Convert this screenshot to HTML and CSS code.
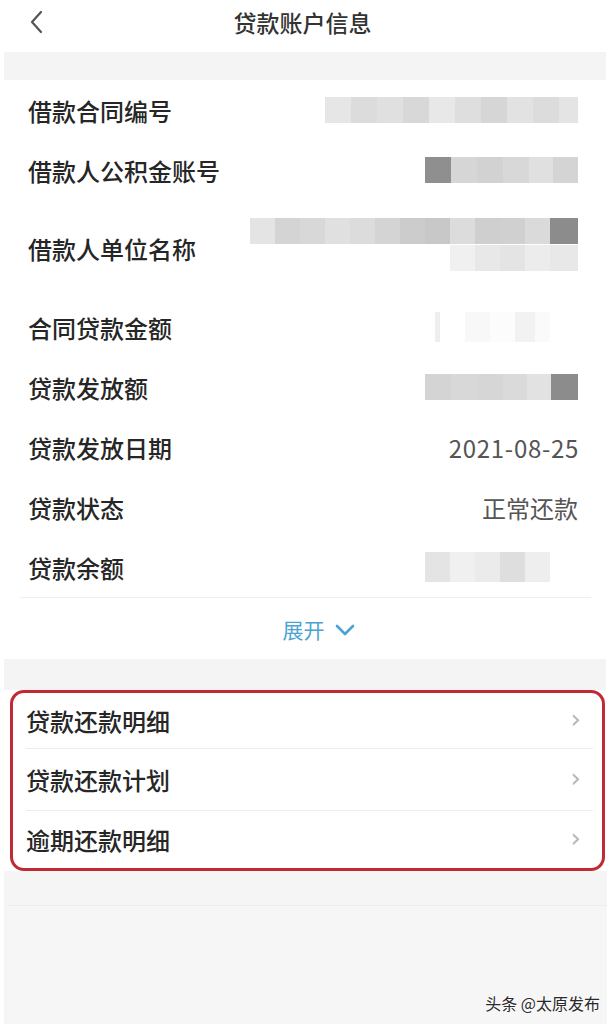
FILE: index.html
```html
<!DOCTYPE html>
<html lang="zh-CN">
<head>
    <meta charset="UTF-8">
    <meta name="viewport" content="width=device-width, initial-scale=1.0">
    <title>贷款账户信息</title>
    <link rel="stylesheet" href="styles.css">
</head>
<body>
    <div class="screen">
        <header class="nav">
            <svg class="back" width="14" height="24" viewBox="0 0 14 24">
                <path d="M12 2 L3 12 L12 22" fill="none" stroke="#555" stroke-width="2.2" stroke-linecap="round" stroke-linejoin="round"/>
            </svg>
            <h1>贷款账户信息</h1>
        </header>

        <div class="gap-strip"></div>

        <section class="info">
            <div class="row">
                <span class="label">借款合同编号</span>
                <div class="mask">
                    <i style="width:26px;background:#e6e6e6"></i><i style="width:26px;background:#dcdcdc"></i><i style="width:26px;background:#e0e0e0"></i><i style="width:26px;background:#d8d8d8"></i><i style="width:26px;background:#e8e8e8"></i><i style="width:26px;background:#dedede"></i><i style="width:26px;background:#d6d6d6"></i><i style="width:26px;background:#e2e2e2"></i><i style="width:26px;background:#dcdcdc"></i><i style="width:19px;background:#e4e4e4"></i>
                </div>
            </div>
            <div class="row">
                <span class="label">借款人公积金账号</span>
                <div class="mask">
                    <i style="width:26px;background:#8f8f8f"></i><i style="width:26px;background:#d6d6d6"></i><i style="width:26px;background:#d2d2d2"></i><i style="width:26px;background:#d8d8d8"></i><i style="width:24px;background:#e0e0e0"></i><i style="width:25px;background:#d4d4d4"></i>
                </div>
            </div>
            <div class="row tall">
                <span class="label">借款人单位名称</span>
                <div class="mask-lines">
                    <div class="mask">
                        <i style="width:25px;background:#e4e4e4"></i><i style="width:25px;background:#d4d4d4"></i><i style="width:25px;background:#d8d8d8"></i><i style="width:25px;background:#e0e0e0"></i><i style="width:25px;background:#dcdcdc"></i><i style="width:25px;background:#d4d4d4"></i><i style="width:25px;background:#cccccc"></i><i style="width:25px;background:#c8c8c8"></i><i style="width:25px;background:#dcdcdc"></i><i style="width:25px;background:#cfcfcf"></i><i style="width:25px;background:#d0d0d0"></i><i style="width:25px;background:#dadada"></i><i style="width:28px;background:#8c8c8c"></i>
                    </div>
                    <div class="mask">
                        <i style="width:25px;background:#f0f0f0"></i><i style="width:25px;background:#e8e8e8"></i><i style="width:25px;background:#e4e4e4"></i><i style="width:25px;background:#ececec"></i><i style="width:28px;background:#e8e8e8"></i>
                    </div>
                </div>
            </div>
            <div class="row">
                <span class="label">合同贷款金额</span>
                <div class="mask faint">
                    <i style="width:5px;background:#eeeeee"></i><i style="width:25px;background:#ffffff"></i><i style="width:25px;background:#f8f8f8"></i><i style="width:25px;background:#fcfcfc"></i><i style="width:20px;background:#f2f2f2"></i><i style="width:15px;background:#fafafa"></i>
                </div>
            </div>
            <div class="row">
                <span class="label">贷款发放额</span>
                <div class="mask">
                    <i style="width:26px;background:#d4d4d4"></i><i style="width:26px;background:#d8d8d8"></i><i style="width:26px;background:#d6d6d6"></i><i style="width:24px;background:#dadada"></i><i style="width:24px;background:#e2e2e2"></i><i style="width:27px;background:#8c8c8c"></i>
                </div>
            </div>
            <div class="row">
                <span class="label">贷款发放日期</span>
                <span class="value date">2021-08-25</span>
            </div>
            <div class="row">
                <span class="label">贷款状态</span>
                <span class="value">正常还款</span>
            </div>
            <div class="row">
                <span class="label">贷款余额</span>
                <div class="mask faint">
                    <i style="width:25px;background:#e4e4e4"></i><i style="width:25px;background:#f0f0f0"></i><i style="width:25px;background:#ebebeb"></i><i style="width:25px;background:#dedede"></i><i style="width:25px;background:#eeeeee"></i>
                </div>
            </div>
            <div class="expand">
                <span>展开</span>
                <svg width="20" height="12" viewBox="0 0 20 12">
                    <path d="M2 2 L10 10 L18 2" fill="none" stroke="#4ba3d2" stroke-width="2.6" stroke-linecap="round" stroke-linejoin="round"/>
                </svg>
            </div>
        </section>

        <div class="gap-strip band"></div>

        <section class="links">
            <div class="link-row">
                <span class="label">贷款还款明细</span>
                <span class="arrow">&#x203A;</span>
            </div>
            <div class="link-row">
                <span class="label">贷款还款计划</span>
                <span class="arrow">&#x203A;</span>
            </div>
            <div class="link-row">
                <span class="label">逾期还款明细</span>
                <span class="arrow">&#x203A;</span>
            </div>
        </section>

        <div class="bottom">
            <div class="bottom-panel"></div>
        </div>

        <div class="watermark">头条 @太原发布</div>
    </div>
</body>
</html>
```

FILE: styles.css
```css
* {
    margin: 0;
    padding: 0;
    box-sizing: border-box;
}

body {
    background-color: #ffffff;
    color: #222222;
    font-family: "Noto Sans CJK SC", "Noto Sans", sans-serif;
}

.screen {
    position: relative;
    width: 611px;
    height: 1024px;
    overflow: hidden;
    display: flex;
    flex-direction: column;
}

.nav {
    height: 52px;
    display: flex;
    align-items: center;
    justify-content: center;
    position: relative;
}

.nav .back {
    position: absolute;
    left: 29px;
    top: 10px;
}

.nav h1 {
    font-size: 23px;
    font-weight: 500;
    color: #333333;
    margin: -9px 0 0 -6px;
}

.gap-strip {
    height: 28px;
    margin: 0 5px 0 4px;
    background-color: #f4f4f4;
}

.info {
    padding: 0 33px 0 28px;
}

.row {
    height: 60px;
    display: flex;
    align-items: center;
    justify-content: space-between;
}

.row.tall {
    height: 97px;
}

.label {
    font-size: 24px;
    font-weight: 500;
    color: #262626;
}

.value {
    font-size: 24px;
    color: #555555;
}

.value.date {
    letter-spacing: 0.7px;
    margin-right: -1px;
}

.mask {
    display: flex;
    height: 26px;
}

.mask i {
    display: block;
    height: 100%;
}

.mask.faint {
    height: 30px;
    margin-right: 28px;
}

.mask-lines {
    display: flex;
    flex-direction: column;
    align-items: flex-end;
    gap: 1px;
    margin-top: -8px;
}

.expand {
    height: 62px;
    margin: 0 -13px 0 -8px;
    padding-left: 26px;
    border-top: 1px solid #efefef;
    display: flex;
    align-items: center;
    justify-content: center;
    gap: 10px;
    color: #4ba3d2;
    font-size: 21px;
}

.expand svg {
    margin-top: 2px;
}

.band {
    height: 31px;
}

.links {
    margin: 0 6px 0 10px;
    border: 3px solid #c02a34;
    border-radius: 14px;
    background-color: #ffffff;
    overflow: hidden;
    padding: 0 9px 0 13px;
}

.link-row {
    height: 62px;
    display: flex;
    align-items: center;
    justify-content: space-between;
    border-top: 1px solid #ececec;
    padding-right: 12px;
}

.link-row:first-child {
    border-top: none;
    height: 55px;
}

.link-row:last-child {
    height: 58px;
}

.arrow {
    font-family: "DejaVu Sans", sans-serif;
    font-size: 26px;
    color: #b5b5b5;
    line-height: 1;
    margin-top: -4px;
}

.bottom {
    flex: 1;
    background-color: #f5f5f5;
    margin: 0 4px;
    padding-top: 34px;
    display: flex;
}

.bottom-panel {
    flex: 1;
    margin-left: 4px;
    border-top: 1px solid #ececec;
    background-color: #f6f6f6;
}

.watermark {
    position: absolute;
    right: 11px;
    bottom: 9px;
    font-size: 16px;
    color: #2a2a2a;
    text-shadow: 0 0 2px #ffffff, 0 0 2px #ffffff;
}
```
